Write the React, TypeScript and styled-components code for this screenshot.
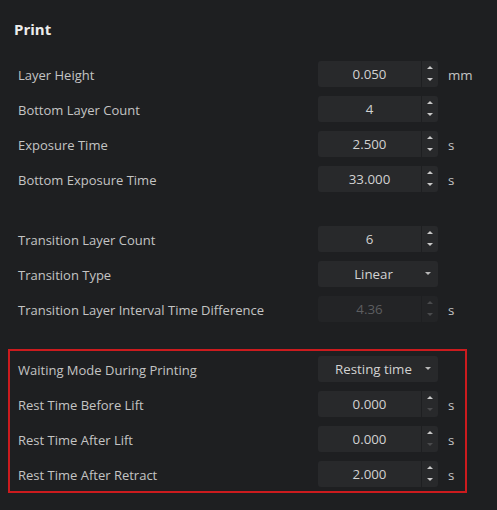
import React from "react";
import styled, { createGlobalStyle } from "styled-components";

const GlobalStyle = createGlobalStyle`
  html, body { margin: 0; padding: 0; background: #1e1f21; }
  body { font-family: "Open Sans", "Noto Sans", sans-serif; }
`;

const Panel = styled.div`
  width: 497px;
  height: 510px;
  box-sizing: border-box;
  padding: 19px 0 0 8px;
  background: #1e1f21;
  overflow: hidden;
`;

const Title = styled.div`
  height: 20px;
  line-height: 20px;
  padding-left: 6px;
  font-size: 15px;
  font-weight: 700;
  color: #ececec;
`;

const Section = styled.div<{ $highlight?: boolean; $gap: number }>`
  width: 459px;
  box-sizing: border-box;
  margin-top: ${(p) => p.$gap}px;
  border: 2px solid ${(p) => (p.$highlight ? "#cc1b1e" : "transparent")};
`;

const Row = styled.div`
  display: grid;
  grid-template-columns: 300px 120px 1fr;
  align-items: center;
  height: 35px;
  padding-left: 8px;
`;

const Label = styled.div`
  padding-top: 2px;
  font-size: 13px;
  color: #c4c4c4;
  white-space: nowrap;
`;

const Unit = styled.div`
  padding: 2px 0 0 10px;
  font-size: 13.3px;
  color: #c4c4c4;
`;

const Spin = styled.div`
  display: flex;
  height: 26px;
  gap: 1px;
`;

const Field = styled.div<{ $disabled?: boolean }>`
  width: 103px;
  display: flex;
  align-items: center;
  justify-content: center;
  background: ${(p) => (p.$disabled ? "#232426" : "#28292b")};
  border-radius: 3px 0 0 3px;
  font-size: 13.3px;
  color: ${(p) => (p.$disabled ? "#5d5e60" : "#d2d2d2")};
`;

const Stepper = styled.div<{ $disabled?: boolean }>`
  width: 16px;
  display: flex;
  flex-direction: column;
  background: ${(p) => (p.$disabled ? "#232426" : "#28292b")};
  border-radius: 0 3px 3px 0;
`;

const Half = styled.div<{ $up?: boolean }>`
  flex: 1;
  display: flex;
  justify-content: center;
  align-items: ${(p) => (p.$up ? "flex-end" : "flex-start")};
  padding: ${(p) => (p.$up ? "0 0 4px" : "5px 0 0")};
`;

const Select = styled.div`
  width: 120px;
  height: 26px;
  box-sizing: border-box;
  position: relative;
  display: flex;
  align-items: center;
  justify-content: center;
  padding-right: 9px;
  background: #28292b;
  border-radius: 3px;
  font-size: 13.3px;
  color: #d2d2d2;
`;

const Caret = styled.span`
  position: absolute;
  right: 7px;
  top: 11px;
  display: flex;
`;

const Tri = ({ up, color }: { up?: boolean; color: string }) => (
  <svg width="6" height="3" viewBox="0 0 6 3">
    <path d={up ? "M0 3 L3 0 L6 3 Z" : "M0 0 L6 0 L3 3 Z"} fill={color} />
  </svg>
);

type NumProps = {
  label: string;
  value: string;
  unit?: string;
  disabled?: boolean;
  downDim?: boolean;
};

const NumberRow = ({ label, value, unit, disabled, downDim }: NumProps) => (
  <Row>
    <Label>{label}</Label>
    <Spin>
      <Field $disabled={disabled}>{value}</Field>
      <Stepper $disabled={disabled}>
        <Half $up>
          <Tri up color={disabled ? "#4a4b4d" : "#c8c8c8"} />
        </Half>
        <Half>
          <Tri color={disabled || downDim ? "#4a4b4d" : "#c8c8c8"} />
        </Half>
      </Stepper>
    </Spin>
    <Unit>{unit}</Unit>
  </Row>
);

const SelectRow = ({ label, value }: { label: string; value: string }) => (
  <Row>
    <Label>{label}</Label>
    <Select>
      {value}
      <Caret>
        <Tri color="#b8b8b8" />
      </Caret>
    </Select>
    <Unit />
  </Row>
);

export default function App() {
  return (
    <>
      <GlobalStyle />
      <Panel>
        <Title>Print</Title>
        <Section $gap={15}>
          <NumberRow label="Layer Height" value="0.050" unit="mm" />
          <NumberRow label="Bottom Layer Count" value="4" />
          <NumberRow label="Exposure Time" value="2.500" unit="s" />
          <NumberRow label="Bottom Exposure Time" value="33.000" unit="s" />
        </Section>
        <Section $gap={21}>
          <NumberRow label="Transition Layer Count" value="6" />
          <SelectRow label="Transition Type" value="Linear" />
          <NumberRow
            label="Transition Layer Interval Time Difference"
            value="4.36"
            unit="s"
            disabled
          />
        </Section>
        <Section $gap={21} $highlight>
          <SelectRow label="Waiting Mode During Printing" value="Resting time" />
          <NumberRow label="Rest Time Before Lift" value="0.000" unit="s" downDim />
          <NumberRow label="Rest Time After Lift" value="0.000" unit="s" downDim />
          <NumberRow label="Rest Time After Retract" value="2.000" unit="s" />
        </Section>
      </Panel>
    </>
  );
}
